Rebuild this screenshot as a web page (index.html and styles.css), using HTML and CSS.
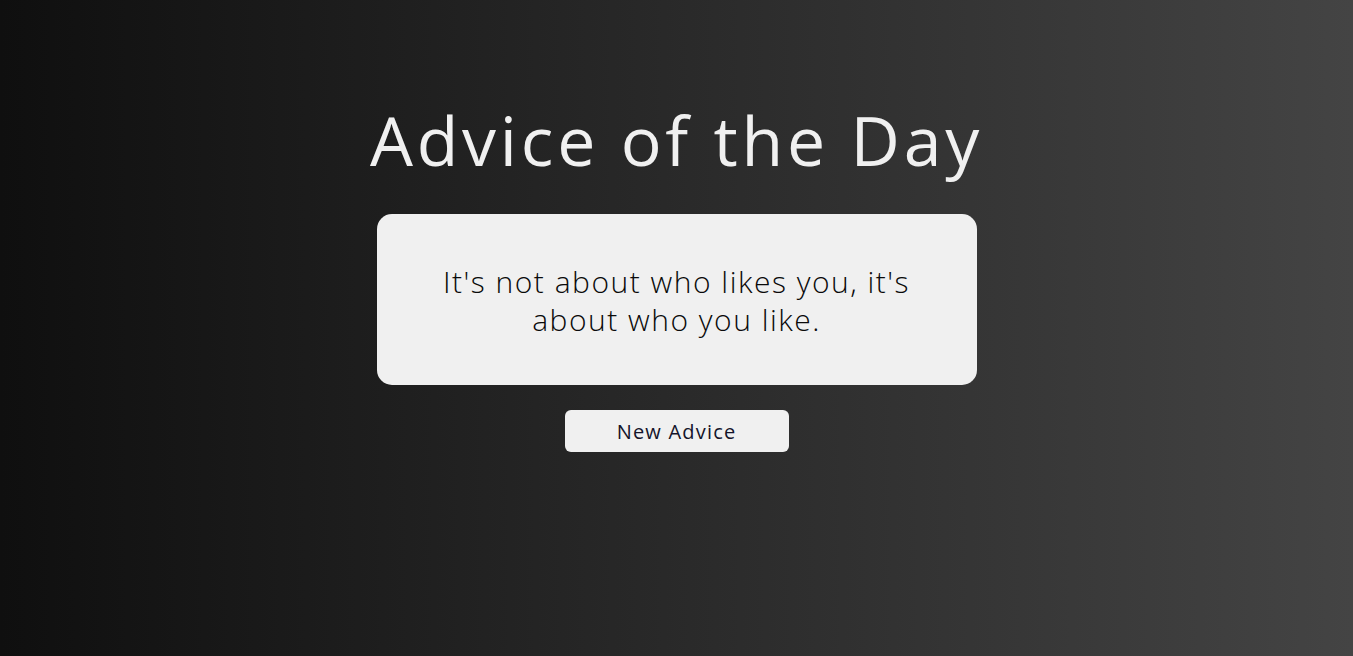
FILE: index.html
```html
<!DOCTYPE html>
<html lang="en">
<head>
<meta charset="utf-8">
<title>Advice of the Day</title>
<link rel="stylesheet" href="styles.css">
</head>
<body>
<main class="app">
  <h1 class="title">Advice of the Day</h1>
  <section class="card">
    <p class="quote">It's not about who likes you, it's about who you like.</p>
  </section>
  <button class="btn" type="button">New Advice</button>
</main>
</body>
</html>
```
FILE: styles.css
```css
html, body {
  margin: 0;
  height: 100%;
}
body {
  background: linear-gradient(to right, #0f0f0f, #444444);
  font-family: "Open Sans", "DejaVu Sans", sans-serif;
  color: #f0f0f0;
}
.app {
  display: flex;
  flex-direction: column;
  align-items: center;
  padding-top: 98px;
}
.title {
  margin: 0;
  font-size: 68px;
  font-weight: 400;
  line-height: 84px;
  letter-spacing: 3.8px;
  color: #f0f0f0;
}
.card {
  box-sizing: border-box;
  width: 600px;
  height: 171px;
  margin-top: 32px;
  padding: 3px 56px 0;
  background: #f0f0f0;
  border-radius: 15px;
  display: flex;
  align-items: center;
  justify-content: center;
}
.quote {
  margin: 0;
  text-align: center;
  color: #0a0a0a;
  font-size: 30px;
  font-weight: 300;
  line-height: 38px;
  letter-spacing: 1.5px;
}
.btn {
  margin-top: 25px;
  width: 224px;
  height: 42px;
  border: none;
  border-radius: 6px;
  background: #f0f0f0;
  color: #14142a;
  font-family: inherit;
  font-size: 20px;
  letter-spacing: 1.2px;
  cursor: pointer;
}
```
